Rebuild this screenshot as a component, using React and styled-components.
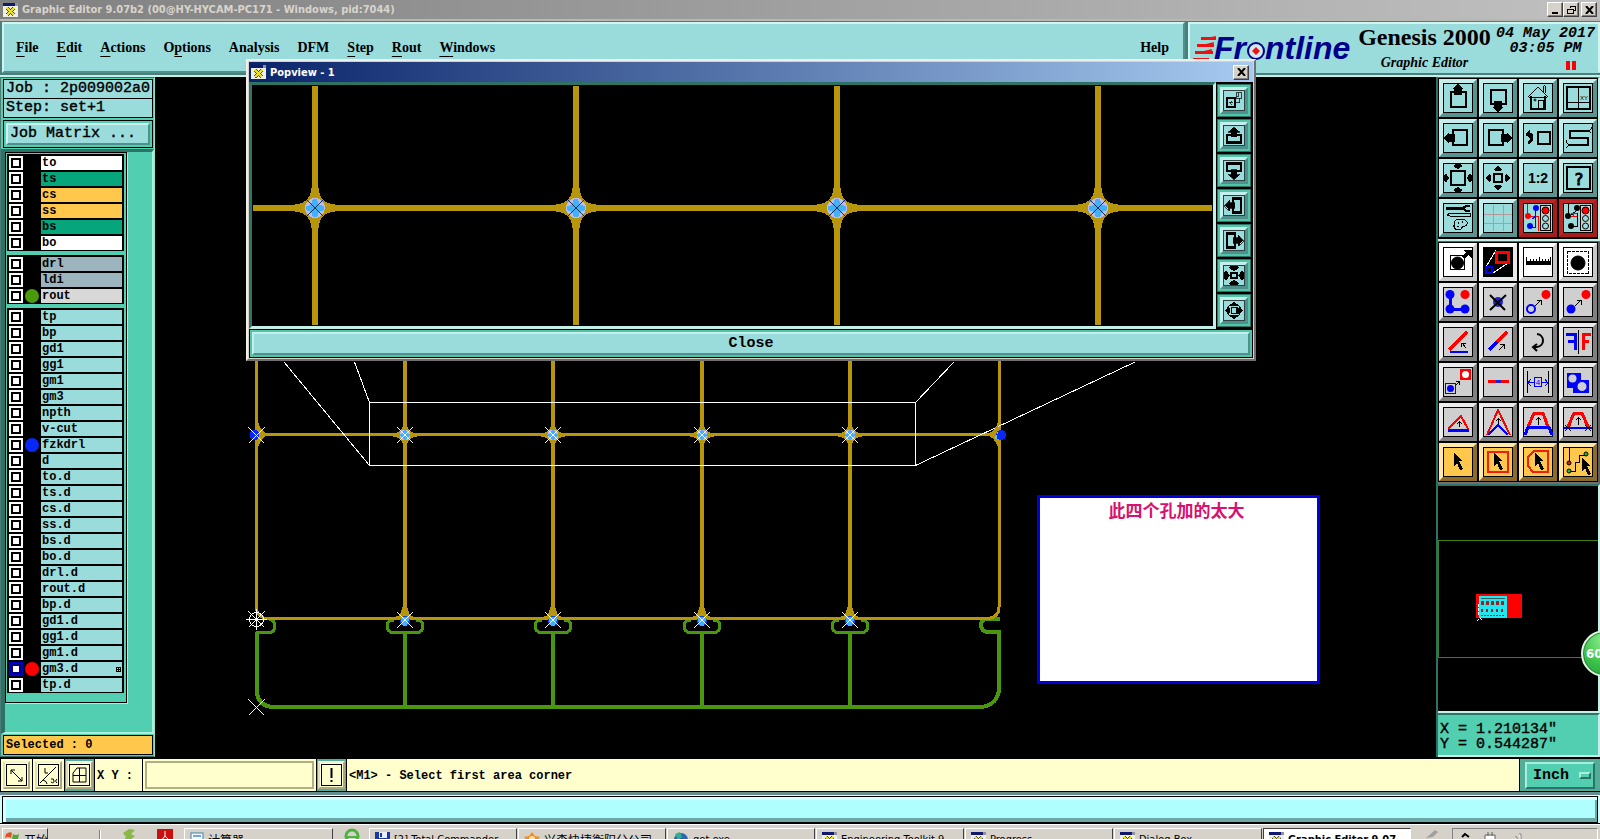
import React, { useState } from 'react';
import styled, { createGlobalStyle } from 'styled-components';

const serif = '"Liberation Serif", serif';
const mono = '"Liberation Mono", monospace';
const tahoma = '"DejaVu Sans Condensed", "DejaVu Sans", "Noto Sans CJK SC", sans-serif';

const GlobalStyle = createGlobalStyle`
* { box-sizing: border-box; }
body { margin: 0; background: #000; overflow: hidden; }
button, input, select { font: inherit; color: inherit; padding: 0; margin: 0; border-radius: 0; }
`;

const Screen = styled.div`
display: flex;
flex-direction: column;
height: 100vh;
background: #000;
color: #000;
position: relative;
overflow: hidden;
`;

/* ---------- window title ---------- */

const TitleBar = styled.div`
display: flex;
align-items: center;
flex: none;
gap: 4px;
height: ${props => props.$active ? '20px' : '21px'};
padding: 0 ${props => props.$active ? '4px 0 2px' : '3px'};
background: linear-gradient(90deg, ${props => props.$active ? '#0a246a, #a6caf0' : '#808080, #c0c0c0'});
color: ${props => props.$active ? '#fff' : '#d8d4cc'};
border-bottom: ${props => props.$active ? '0' : '2px solid #b8b8b0'};
font: bold 11px ${tahoma};
`;

const TitleText = styled.span`
flex: 1;
white-space: nowrap;
`;

const WinButtons = styled.div`
display: flex;
`;

const WinButton = styled.button`
width: 16px;
height: 15px;
display: flex;
align-items: center;
justify-content: center;
background: #d6d2ca;
border: 1px solid;
border-color: #fff #404040 #404040 #fff;
box-shadow: inset -1px -1px #808080;
margin-left: ${props => props.$gap ? '2px' : '0'};
`;

/* ---------- header ---------- */

const Header = styled.header`
display: flex;
flex: none;
height: 56px;
padding: 1px 0 2px 2px;
gap: 3px;
background: #4a7f7a;
border-bottom: 2px solid #c4f0ea;
`;

const MenuBar = styled.nav`
flex: 1;
display: flex;
align-items: center;
gap: 18px;
padding: 0 14px 0 12px;
background: #9adbdb;
border: 2px solid;
border-color: #d0f6f2 #4f8f8c #4f8f8c #d0f6f2;
font: bold 14px ${serif};
`;

const MenuItem = styled.button`
background: none;
border: 0;
margin-left: ${props => props.$last ? 'auto' : '0'};
`;

const Key = styled.span`
text-decoration: underline;
text-underline-offset: 4px;
`;

const Brand = styled.div`
width: 412px;
display: flex;
background: #9adbdb;
border: 2px solid;
border-color: #d0f6f2 #d0f6f2 #9adbdb #d0f6f2;
`;

const BrandLogo = styled.svg`
width: 166px;
height: 50px;
flex: none;
`;

const Product = styled.div`
flex: 1;
text-align: center;
white-space: nowrap;
font: bold 24px/27px ${serif};
`;

const Subtitle = styled.div`
font: italic bold 14px/24px ${serif};
`;

const Clock = styled.div`
width: 105px;
display: flex;
flex-direction: column;
align-items: center;
white-space: nowrap;
font: italic bold 15px/15px ${mono};
padding-top: 2px;
`;

const Pause = styled.div`
width: 10px;
height: 9px;
margin: 5px 0 0 50px;
border: solid #f00;
border-width: 0 4px;
`;

/* ---------- middle ---------- */

const Main = styled.main`
flex: 1;
min-height: 0;
display: flex;
padding-bottom: 2px;
`;

const Sidebar = styled.aside`
width: 155px;
flex: none;
display: flex;
flex-direction: column;
background: #52ceb0;
border: 1px solid;
border-color: #2e7265 #8ce4cc #2e7265 #4a7f7a;
`;

const JobInfo = styled.div`
padding: 1px 1px 0 2px;
font: 15px/18px ${mono};
-webkit-text-stroke: 0.4px #000;
`;

const InfoLine = styled.div`
height: 20px;
margin-bottom: -1px;
padding-left: 2px;
border: 1px solid #000;
background: #9adbdb;
white-space: nowrap;
`;

const MatrixFrame = styled.div`
margin-top: 3px;
padding: 2px;
border: 1px solid #000;
`;

const MatrixButton = styled.button`
width: 100%;
height: 22px;
text-align: left;
padding-left: 2px;
background: #9adbdb;
border: 2px solid;
border-color: #cdf3f0 #4f8f8c #4f8f8c #cdf3f0;
`;

const LayerArea = styled.div`
flex: 1;
margin-top: 1px;
padding: 0 25px 0 0;
border: solid;
border-width: 3px 2px 2px 4px;
border-color: #2e7265 #a8f0dc #a8f0dc #2e7265;
`;

const LayerList = styled.div`
padding: 1px 2px 9px 1px;
border: 1px solid #000;
box-shadow: 1px 1px #a8f0dc;
display: flex;
flex-direction: column;
gap: 4px;
`;

const LayerGroup = styled.ul`
list-style: none;
margin: 0;
padding: 1px 2px 0 2px;
background: #000;
`;

const Layer = styled.li`
display: flex;
align-items: center;
height: 16px;
font: bold 12px/14px ${mono};
`;

const LayerCheck = styled.input`
appearance: none;
flex: none;
width: 14px;
height: 14px;
background: #fff;
border: 2px solid ${props => props.$work ? '#0000c8' : '#fff'};
box-shadow: inset 0 0 0 2px ${props => props.$work ? '#000080' : '#000'};
`;

const LayerDot = styled.span`
flex: none;
width: 14px;
height: 14px;
margin: 0 2px;
border-radius: 50%;
background: ${props => props.$color || '#000'};
`;

const LayerName = styled.label`
flex: 1;
display: flex;
justify-content: space-between;
height: 14px;
padding: 0 1px;
background: ${props => props.$color};
`;

const Affected = styled.svg`
width: 5px;
height: 5px;
margin-top: 5px;
`;

const Selected = styled.div`
height: 20px;
margin: 1px 1px 1px 2px;
padding-left: 2px;
border: 1px solid #000;
background: #ffc84c;
font: bold 12px/18px ${mono};
`;

const Canvas = styled.section`
flex: 1;
min-width: 0;
position: relative;
overflow: hidden;
`;

const Drawing = styled.svg`
display: block;
width: 100%;
height: 100%;
`;

const Note = styled.div`
position: absolute;
left: 882px;
top: 418px;
width: 283px;
height: 189px;
border: 3px solid #0000d8;
background: #fff;
color: #d8106e;
text-align: center;
padding-right: 4px;
font: bold 17px/24px "Noto Sans CJK SC", sans-serif;
`;

/* ---------- right tools ---------- */

const ToolPanel = styled.aside`
width: 164px;
flex: none;
display: flex;
flex-direction: column;
border-left: 2px solid #2e7265;
`;

const ToolGrid = styled.div`
display: grid;
grid-template-columns: repeat(4, 38px);
gap: 2px;
padding: 1px 1px ${props => props.$gray ? '1px' : '2px'};
border: solid;
border-width: 1px 2px 2px 0;
border-color: ${props => props.$gray ? '#606060 #606060 #707070' : '#2e7265 #c4f0ea #c4f0ea'};
`;

const tones = {
  teal: ['#9adbdb', '#c4efec', '#5a9490'],
  alert: ['#9adbdb', '#c02424', '#a81c1c'],
  gray: ['#cfcfcf', '#ececec', '#808080'],
  white: ['#fff', '#fff', '#c8c8c8'],
  inverse: ['#fff', '#fff', '#e8e8e8'],
  orange: ['#ffc84c', '#ffe9a8', '#8c6c28'],
};

const Tool = styled.button`
display: block;
width: 38px;
height: 38px;
background: ${props => tones[props.$tone][0]};
border: 4px solid;
border-color: ${props => tones[props.$tone][1]} ${props => tones[props.$tone][2]} ${props => tones[props.$tone][2]} ${props => tones[props.$tone][1]};

svg {
  display: block;
  width: 30px;
  height: 30px;
}

circle {
  shape-rendering: geometricPrecision;
}
`;

const Overview = styled.div`
flex: 1;
min-height: 0;
border: solid;
border-width: 2px 2px 2px 0;
border-color: #2e7265 #c4f0ea #c4f0ea;
`;

const Coords = styled.div`
height: 44px;
padding: 7px 2px 5px;
background: #52ceb0;
border: solid;
border-width: 2px 2px 2px 0;
border-color: #2e7265 #c4f0ea #c4f0ea;
font: 15px/15px ${mono};
-webkit-text-stroke: 0.4px #000;
`;

const Speed = styled.div`
position: absolute;
right: -28px;
top: 630px;
width: 47px;
height: 47px;
border: 2px solid #dff5df;
border-radius: 50%;
background: radial-gradient(circle at 50% 20%, #90f090, #38c048 60%, #2ca040);
box-shadow: inset 0 0 0 1px #30803c;
color: #fff;
padding-left: 3px;
font: bold 13px/43px ${tahoma};
`;

/* ---------- popview ---------- */

const Popup = styled.section`
position: absolute;
left: 246px;
right: 344px;
top: 59px;
height: 302px;
display: flex;
flex-direction: column;
padding: 1px;
background: #d6d2ca;
border: 2px solid;
border-color: #f0eee8 #707070 #707070 #f0eee8;
`;

const PopupBody = styled.div`
flex: 1;
min-height: 0;
display: flex;
background: #000;
`;

const PopupCanvas = styled.div`
flex: 1;
min-width: 0;
border: 3px solid;
border-color: #2e7265 #c4f0ea #c4f0ea #2e7265;
`;

const PopupTools = styled.div`
display: flex;
flex-direction: column;
gap: 2px;
padding: 2px 2px 1px 1px;
`;

const PopupTool = styled.button`
display: block;
width: 34px;
height: 33px;
background: #9adbdb;
border: 3px solid #52c4a8;
outline: 1px solid #2e7265;
outline-offset: -1px;

svg {
  display: block;
  width: 28px;
  height: 27px;
  border: 3px solid;
  border-color: #c4efec #4f8f8c #4f8f8c #c4efec;
}
`;

const CloseFrame = styled.div`
flex: none;
padding: 1px;
background: #000;
`;

const CloseButton = styled.button`
display: block;
width: 100%;
height: 27px;
background: #9adbdb;
outline: 2px solid #52c4a8;
outline-offset: -2px;
border: 4px solid;
border-color: #c4efec #4f8f8c #4f8f8c #c4efec;
font: bold 15px/15px ${mono};
`;

/* ---------- bottom ---------- */

const InputBar = styled.div`
flex: none;
height: 33px;
display: flex;
gap: 1px;
padding-left: 1px;
background: #000;
font: bold 12px ${mono};
border-bottom: 1px solid #000;
`;

const BarCell = styled.div`
display: flex;
align-items: center;
justify-content: center;
flex: none;
width: ${props => props.$width};
background: ${props => props.$teal ? '#52ae98' : '#ffffce'};
`;

const BarButton = styled.button`
width: 27px;
height: 28px;
background: #ffffce;
border: 2px solid;
border-color: #f4f4d0 #a8a888 #a8a888 #e0e0b8;

svg {
  display: block;
  margin: 1px;
  width: 21px;
  height: 22px;
}
`;

const CoordLabel = styled.label`
display: flex;
align-items: center;
width: 47px;
padding: 2px 0 0 2px;
background: #ffffce;
white-space: pre;
`;

const CoordInput = styled.input`
width: 173px;
height: 32px;
padding-left: 5px;
background: #ffffce;
border: 2px solid #ffffce;
box-shadow: inset 0 0 0 2px #b0b088;
`;

const Message = styled.div`
flex: 1;
padding: 1px 0 0 2px;
line-height: 32px;
background: #ffffce;
`;

const Unit = styled.label`
display: flex;
align-items: center;
width: 70px;
height: 27px;
padding: 0 2px 0 6px;
background: #52ceb0;
border: 2px solid;
border-color: #a8f0dc #2e7265 #2e7265 #a8f0dc;
`;

const UnitSelect = styled.select`
appearance: none;
width: 46px;
background: none;
border: 0;
font: bold 15px ${mono};
`;

const Nub = styled.span`
width: 12px;
height: 7px;
background: #52ceb0;
border: 2px solid;
border-color: #a8f0dc #2e7265 #2e7265 #a8f0dc;
`;

const CommandLine = styled.div`
flex: none;
height: 31px;
margin-bottom: 1px;
padding: 1px 2px 2px;
background: #d0ffff;
border-top: 3px solid #688c90;
`;

const CommandField = styled.div`
height: 27px;
background: #b0ffff;
border: 1px solid #000;
box-shadow: inset 3px 3px #d8ffff, inset -2px -4px #6ca8a8;
`;

const Taskbar = styled.footer`
flex: none;
height: 15px;
overflow: hidden;
display: flex;
padding: 3px 2px 0;
background: #d6d2ca;
border-top: 1px solid #fff;
font: 11px ${tahoma};
`;

const Task = styled.button`
display: flex;
align-items: center;
gap: 4px;
flex: ${props => props.$fixed ? 'none' : '1 1 0'};
width: ${props => props.$fixed || 'auto'};
min-width: 0;
height: 22px;
padding-left: ${props => props.$start ? '2px' : '5px'};
margin-right: 1px;
overflow: hidden;
white-space: nowrap;
background: ${props => props.$active ? '#fff' : '#d6d2ca'};
border: 1px solid;
border-color: ${props => props.$active ? '#404040 #fff #fff #404040' : '#fff #404040 #404040 #fff'};
font-weight: ${props => props.$active ? 'bold' : 'normal'};
font-size: ${props => props.$large ? '12px' : '11px'};

svg {
  flex: none;
}
`;

const Quick = styled.div`
flex: none;
width: ${props => props.$width};
display: flex;
justify-content: center;
height: 22px;
`;

const Divider = styled.span`
flex: none;
width: 2px;
height: 16px;
margin: 2px 20px 0 58px;
border-left: 1px solid #808080;
border-right: 1px solid #fff;
`;

const QuickIcon = styled.svg`
flex: none;
width: 16px;
height: 16px;
margin-right: 20px;
`;

const Tray = styled.div`
flex: none;
width: 146px;
height: 22px;
padding: 2px 8px;
display: flex;
gap: 12px;
border: 1px solid;
border-color: #808080 #fff #fff #808080;
`;

/* ---------- small glyphs ---------- */

const AppIcon = () => (
  <svg width="15" height="14" viewBox="0 0 15 14" shapeRendering="crispEdges">
    <rect width="15" height="14" fill="#eeeee8" />
    <rect width="12" height="3" fill="#101870" />
    <rect x="12" width="3" height="3" fill="#9090a0" />
    <path d="M4 5l7 7M11 5l-7 7" stroke="#505040" strokeWidth="3" />
    <path d="M4 5l7 7M11 5l-7 7" stroke="#e8e020" strokeWidth="2" />
  </svg>
);

const Cross = () => (
  <svg width="9" height="8" viewBox="0 0 9 8"><path d="M1 0l7 8M8 0l-7 8" stroke="#000" strokeWidth="2" /></svg>
);

const Frame = ({ children }) => (
  <svg viewBox="0 0 30 30" fill="none" stroke="#000" strokeWidth="1" shapeRendering="crispEdges">
    <rect x="0.5" y="0.5" width="29" height="29" />
    {children}
  </svg>
);

const upArrow = 'M15 1l6 5h-2v6h-8v-6h-2z';

const Arrow = ({ turn = 0 }) => <path d={upArrow} fill="#000" stroke="none" transform={`rotate(${turn} 15 15)`} />;

const Heads = ({ d }) => [0, 90, 180, 270].map(a => (
  <path key={a} d={d} fill="#000" stroke="none" transform={`rotate(${a} 15 15)`} />
));

const Pads = ({ children }) => (
  <>
    {children}
    <rect x="17.500" y="2.500" width="10" height="25" fill="#cfcfcf" />
    <circle cx="22.5" cy="7.5" r="3.5" fill="#f00" />
    <circle cx="22.5" cy="15.5" r="3" fill="#9adbdb" />
    <circle cx="22.5" cy="23" r="3" fill="#9adbdb" />
  </>
);

const Pointer = ({ x = 0, y = 0 }) => (
  <path d="M11 6l8 8-3 0 4 8-3 1-3-7-3 3z" fill="#000" stroke="none" transform={`translate(${x} ${y})`} />
);

const viewTools = [
  ['Pan up', <><rect x="8" y="9" width="15" height="15" strokeWidth="2" /><Arrow /></>],
  ['Pan down', <><rect x="8" y="7" width="15" height="14" strokeWidth="2" /><Arrow turn={180} /></>],
  ['Home', <>
    <path d="M5 14L15 4l10 10M20 9V4l2-2M22 10V3" strokeWidth="1" />
    <path d="M8 13v13h14V13" strokeWidth="2" />
    <path d="M6 14h18M15 25v-8h5v8" /><circle cx="12" cy="17" r="1" />
  </>],
  ['Coordinates', <>
    <rect x="4" y="4" width="23" height="22" strokeWidth="2" /><path d="M15.500 4v22M4 19.500h23" />
    <text x="17" y="17" fontSize="6" fontFamily="Liberation Sans" fill="#000" stroke="none">XY</text>
  </>],
  ['Pan left', <><rect x="10" y="7" width="14" height="15" strokeWidth="2" /><Arrow turn={270} /></>],
  ['Pan right', <><rect x="6" y="7" width="14" height="15" strokeWidth="2" /><Arrow turn={90} /></>],
  ['Previous view', <>
    <rect x="15" y="9" width="12" height="12" strokeWidth="2" />
    <path d="M3 11h5q2 4 0 7l-3 2" strokeWidth="3" /><path d="M7 6v10l-5-5z" fill="#000" stroke="none" />
  </>],
  ['Serpentine', <><path d="M26 8H7v7h18v7H6" strokeWidth="2" /><path d="M26 8l2-2v-2M26 8l2 2M6 22l-3-3v-2M6 22l-3 3" /></>],
  ['Zoom out', <><rect x="8" y="8" width="14" height="14" strokeWidth="2" /><Heads d="M15 6l5-3-3-2h-4l-3 2z" /></>],
  ['Zoom in', <><rect x="11" y="11" width="8" height="8" strokeWidth="2" /><Heads d="M15 3l5 4-4 1h-2l-4-1z" /></>],
  ['Scale one to two', <text x="15" y="20" textAnchor="middle" fontSize="14" fontWeight="bold" fontFamily="Liberation Sans" fill="#000" stroke="none">1:2</text>],
  ['Query', <>
    <rect x="4" y="4" width="23" height="22" strokeWidth="2" />
    <text x="16" y="22" textAnchor="middle" fontSize="16" fontFamily="DejaVu Sans" fill="#000" stroke="#000">?</text>
  </>],
  ['Setup', <>
    <path d="M3 5h17" strokeWidth="3" /><path d="M27 3h-4l-3 2 3 3h4" strokeWidth="2" />
    <path d="M4 12l3-2h20v3H7z" />
    <path d="M13 17c6-2 12 0 11 4c-1 4-6 1-6 5c-3 2-8 0-7-4c0-2 0-4 2-5zM15 19v2M19 18v2M14 23h2" />
  </>],
  ['Grid', <path d="M10.500 2v26M20.500 2v26M1 11.500h28M1 20.500h28" stroke="#b49a9c" />],
  ['Net select', <Pads>
    <path d="M4.500 1v12M4 13.500h11v14" stroke="#f00" />
    <path d="M12.500 5v8l-3 3M7 24h5V14" stroke="#00f" />
    <circle cx="13" cy="5" r="3" fill="#00f" stroke="none" /><circle cx="5" cy="13" r="3" fill="#f00" stroke="none" />
    <circle cx="7" cy="23" r="3" fill="#00f" stroke="none" />
  </Pads>, 'alert'],
  ['Net compare', <Pads>
    <path d="M5.500 1v12M13 5v3l-6 5M8 23h6V10" />
    <path d="M8 10.500h6M8 13.500h6M10.500 10v4" stroke="#f00" />
    <circle cx="14" cy="5" r="3" fill="#000" stroke="none" /><circle cx="5" cy="13" r="3" fill="#000" stroke="none" />
    <circle cx="8" cy="23" r="3" fill="#000" stroke="none" />
  </Pads>, 'alert'],
];

const editTools = [
  ['Move feature', <>
    <rect x="7.500" y="8.500" width="14" height="14" /><circle cx="14.500" cy="16" r="6" fill="#000" />
    <path d="M20 11l6-6" strokeWidth="3" /><path d="M20 3h9v8z" fill="#000" stroke="none" />
  </>, 'white'],
  ['Area zoom', <>
    <rect x="1" y="1" width="28" height="28" fill="#000" stroke="none" />
    <path d="M3 20L13 3M10 26l15-10" stroke="#fff" />
    <rect x="13" y="5" width="12" height="10" stroke="#f00" strokeWidth="3" />
    <rect x="3" y="20" width="6" height="6" stroke="#0000f8" strokeWidth="2" />
  </>, 'inverse'],
  ['Measure', <><path d="M3 16h25" strokeWidth="4" /><path d="M3.500 10v8M7.500 12v6M10.500 12v6M13.500 12v6M16.500 10v8M19.500 12v6M22.500 12v6M25.500 12v6M27.500 10v8" /></>, 'white'],
  ['Select', <><rect x="4.500" y="4.500" width="21" height="22" strokeDasharray="3 1" /><circle cx="15" cy="16" r="7" fill="#000" /></>, 'white'],
  ['Chain', <>
    <path d="M7 8v14h15" stroke="#00f" strokeWidth="3" />
    <circle cx="7" cy="7.500" r="4.500" fill="#00f" stroke="none" /><circle cx="7" cy="22" r="4.500" fill="#00f" stroke="none" />
    <circle cx="22" cy="22" r="4.500" fill="#00f" stroke="none" /><circle cx="22" cy="7.500" r="4.500" fill="#f00" stroke="none" />
  </>],
  ['Delete', <><circle cx="15" cy="15" r="5" fill="#2020d0" stroke="none" /><path d="M7 8l15 15M23 8L7 23" strokeWidth="2" shapeRendering="auto" /></>],
  ['Copy', <><circle cx="8" cy="22" r="4" stroke="#00f" strokeWidth="2" /><circle cx="23" cy="7.500" r="4.500" fill="#f00" stroke="none" /><path d="M12 19l5-5M14 13.500h4v4" /></>],
  ['Move', <><circle cx="8" cy="22" r="4.500" fill="#00f" stroke="none" /><circle cx="23" cy="7.500" r="4.500" fill="#f00" stroke="none" /><path d="M12 19l5-5M14 13.500h4v4" /></>],
  ['Rotate', <><path d="M7 25h18" stroke="#00f" strokeWidth="2" /><path d="M6 23L24 5" stroke="#f00" strokeWidth="3" /><path d="M23 21l-4-5M18.500 20v-4h4" /></>],
  ['Extend', <><path d="M6 23l9-9" stroke="#00f" strokeWidth="3" /><path d="M14 15l10-10" stroke="#f00" strokeWidth="3" /><path d="M16 23l5-5M17 17.500h4v4" /></>],
  ['Turn back', <path d="M14 7c8 1 8 12 0 13h-3M14 17l-4 3 4 4" strokeWidth="2" shapeRendering="auto" />],
  ['Mirror', <><path d="M3 7h9v16M5 14h7" stroke="#00f" strokeWidth="3" /><path d="M28 7h-8v16M19 14h7" stroke="#f00" strokeWidth="3" /><path d="M15.500 3v24" /></>],
  ['Swap', <>
    <rect x="2.500" y="16.500" width="10" height="10" stroke="#00f" /><circle cx="7.500" cy="21.500" r="3.500" fill="#00f" stroke="none" />
    <rect x="17" y="2" width="11" height="11" fill="#f00" stroke="none" /><circle cx="22.500" cy="7.500" r="3.500" fill="#fff" stroke="none" />
    <path d="M13 18l3-3M13 14.500h3v3" />
  </>],
  ['Break', <><path d="M5 14.500h21" stroke="#f00" strokeWidth="3" /><path d="M13 14.500h5" stroke="#2020d0" strokeWidth="3" /></>],
  ['Distance', <>
    <path d="M4.500 4v22M25.500 4v22" /><path d="M5 15.500h6M19 15.500h6M8 12l-3 4 3 3M22 12l3 4-3 3" stroke="#00f" />
    <rect x="11.500" y="10.500" width="7" height="9" stroke="#00f" />
    <text x="15" y="18" textAnchor="middle" fontSize="8" fontFamily="Liberation Sans" fill="#00f" stroke="none">4</text>
  </>],
  ['Merge', <>
    <rect x="4" y="6" width="14" height="15" fill="#00f" stroke="none" /><rect x="10" y="13" width="16" height="13" fill="#00f" stroke="none" />
    <circle cx="9.500" cy="11.500" r="4" fill="#cfcfcf" stroke="none" /><circle cx="19" cy="19.500" r="5" fill="#cfcfcf" stroke="#00f" />
  </>],
  ['Triangle', <><path d="M5 22L18 9l7 13" stroke="#f00" strokeWidth="2" /><path d="M5 23h21" stroke="#00f" strokeWidth="3" /><path d="M16.500 20v-5M14 17l2.500-2 2.500 2" /></>],
  ['Spike', <><path d="M4 28L15 3l12 25" stroke="#f00" strokeWidth="2" /><path d="M5 28l10-10 10 10" stroke="#00f" strokeWidth="2" /><path d="M15.500 17v-5M13 14l2.500-2 2.500 2" /></>],
  ['Bridge', <><path d="M5 20L11 6h9l5 14" stroke="#f00" strokeWidth="3" /><path d="M2 28l3-8h21l3 8" stroke="#00f" strokeWidth="3" /><path d="M15.500 18v-7M13 13l2.500-2 2.500 2" /></>],
  ['Bridge cut', <><path d="M5 20L11 6h8l6 14" stroke="#f00" strokeWidth="3" /><path d="M1 21h28" stroke="#00f" strokeWidth="2" /><path d="M15.500 18v-7M13 13l2.500-2 2.500 2M2 18l6 6M8 18l-6 6M22 18l6 6M28 18l-6 6" /></>],
  ['Pick', <Pointer />, 'orange'],
  ['Pick in rectangle', <><rect x="5" y="5" width="20" height="20" stroke="#f02010" strokeWidth="2" /><Pointer /></>, 'orange'],
  ['Pick in polygon', <><path d="M11 4h14v21H10l-5-6v-9z" stroke="#f02010" strokeWidth="2" /><Pointer x={1} /></>, 'orange'],
  ['Pick net', <>
    <path d="M6.500 1v15M6 24h6V15h4V8h7" /><circle cx="6" cy="16" r="2" fill="#d02010" /><circle cx="6" cy="24" r="2" fill="#20c020" />
    <circle cx="23" cy="7" r="2" fill="#20c020" /><Pointer x={8} y={5} />
  </>, 'orange'],
];

const popTools = [
  ['Linked view', <><rect x="5" y="12" width="12" height="12" strokeWidth="3" /><path d="M17 18h6v-6M18 4h8v8h-8zM22 4v5h-3M14 18H8M11 15l-3 3 3 3" /></>],
  ['Popview up', <><rect x="5" y="14" width="20" height="11" strokeWidth="3" /><path d="M15 3l8 7h-4v7h-8v-7h-4z" fill="#000" /></>],
  ['Popview down', <><rect x="5" y="5" width="20" height="11" strokeWidth="3" /><path d="M15 28l8-7h-4v-7h-8v7h-4z" fill="#000" /></>],
  ['Popview left', <><rect x="14" y="5" width="11" height="20" strokeWidth="3" /><path d="M2 15l7-8v4h7v8h-7v4z" fill="#000" /></>],
  ['Popview right', <><rect x="5" y="5" width="11" height="20" strokeWidth="3" /><path d="M28 15l-7-8v4h-7v8h7v4z" fill="#000" /></>],
  ['Popview zoom out', <><rect x="11" y="11" width="8" height="8" strokeWidth="3" /><Heads d="M15 9l7-5-3-3h-8l-3 3z" /></>],
  ['Popview zoom in', <><rect x="11" y="11" width="8" height="8" strokeWidth="2" /><Heads d="M15 2l7 6-5 1h-4l-5-1z" /></>],
];

const star = 'M-22-3L-13-5L-8-8L-5-13L-3-22H3L5-13L8-8L13-5L22-3V3L13 5L8 8L5 13L3 22H-3L-5 13L-8 8L-13 5L-22 3Z';

const Hole = ({ x, y, k = 1 }) => (
  <g transform={`translate(${x} ${y}) scale(${k})`}>
    <path d={star} fill="#b8960c" />
    <circle r="10" fill="#bcbcf0" />
    <path d="M-9-2L-4-3-2-9H2L4-3 9-2V2L4 4 2 9H-2L-4 4-9 2Z" fill="#44b0f8" />
    <path d="M-8-8L8 8M8-8L-8 8" stroke="#103050" strokeWidth="1" />
  </g>
);

const Ex = ({ x, y }) => <path d={`M${x - 8} ${y - 8}l16 16M${x + 8} ${y - 8}l-16 16`} stroke="#fff" />;

const columns = [405, 553, 702, 850];

const Board = () => (
  <Drawing shapeRendering="crispEdges" fill="none">
    <g transform="translate(-155 -77)">
      <g stroke="#4a960e" strokeWidth="3">
        <path d="M256.500 632V690Q258 707 274 707H982Q998 704 999 689V632H989Q981 632 981 625Q981 619 988 619H1000" strokeWidth="4" />
        <path d="M256 632.500h13q6 0 6-7q0-5-6-6" />
        {columns.map(x => (
          <g key={x}>
            <path d={`M${x} 632V707`} strokeWidth="4" />
            <path d={`M${x - 11} 620q-7 0-7 6q0 6.500 7 6.500h22q7 0 7-6.500q0-6-7-6`} />
          </g>
        ))}
      </g>
      <g stroke="#b8960c" strokeWidth="3">
        <path d="M256.500 340V610Q259 618.500 268 618.500H988Q999 617 999 607V340" />
        <path d="M256 434.500H998" />
        {columns.map(x => <path key={x} d={`M${x} 340V618`} strokeWidth="4" />)}
      </g>
      <path d="M369.500 402.500H915.500V465.500H369.500ZM284 362L369.500 465.500M354.500 362L369.500 402.500M954 362L915.500 402.500M1135 362L915.500 465.500" stroke="#fff" />
      <path d="M258 422q3 10 11 12.500q-8 3-11 13zM998 422q-3 10-12 12.500q9 3 12 13z" fill="#b8960c" />
      <circle cx="254.500" cy="435" r="5" fill="#0828f8" />
      <circle cx="1001" cy="435" r="5" fill="#0828f8" />
      <path d="M997 430v9h-2v-3l3-3z" fill="#60c0f0" />
      <Ex x={256.5} y={435.5} />
      {columns.map(x => (
        <g key={x}>
          <Hole x={x} y={435} k={0.55} />
          <Ex x={x} y={435} />
          <path d={`M${x - 12} 618l7-3 3-9h4l3 9 7 3z`} fill="#b8960c" />
          <circle cx={x} cy="621" r="5" fill="#0848e8" />
          <path d={`M${x - 4} 617h8v3l-2 6h-4l-2-6z`} fill="#44b0f8" />
          <Ex x={x} y={620} />
        </g>
      ))}
      <circle cx="256.500" cy="619.500" r="7" stroke="#fff" />
      <path d="M246 619.500h21M256.500 609v21" stroke="#fff" />
      <Ex x={256.5} y={619.5} />
      <Ex x={256.5} y={707.5} />
    </g>
  </Drawing>
);

const PopBoard = () => (
  <Drawing shapeRendering="crispEdges" fill="none">
    <g transform="translate(-252 -85)">
      <path d="M253 208H1212M315 86V325M576 86V325M837 86V325M1098 86V325" stroke="#b8960c" strokeWidth="6" />
      {[315, 576, 837, 1098].map(x => <Hole key={x} x={x} y={208} />)}
    </g>
  </Drawing>
);

const Panorama = () => (
  <Drawing shapeRendering="crispEdges" fill="none">
    <path d="M170 54.500H.5V171.500H170" stroke="#3c8014" />
    <rect x="38" y="108" width="46" height="24" fill="#f00" />
    <rect x="41" y="110" width="28" height="22" fill="#20e8f0" />
    <path d="M43 112.500h24" stroke="#306060" />
    <path d="M43 117h24" stroke="#a02020" strokeWidth="4" strokeDasharray="3 2" />
    <path d="M43 124h24" stroke="#a02020" strokeWidth="3" strokeDasharray="2 3" />
    <path d="M43 129.500h24" stroke="#a02020" strokeDasharray="2 1" />
    <path d="M39 135l3-3 3 3M40 118v12" stroke="#fff" strokeDasharray="3 1" />
  </Drawing>
);

const Logo = () => (
  <BrandLogo viewBox="0 0 166 50">
    <path d="M11 13h15v3h-15zM7 20h17v3h-17zM5 27h18v3h-18zM3 34h16v2h-16z" fill="#f01010" />
    <path d="M16 14l10-2-1 4zM12 21l12-3-1 5zM10 28l12-3-1 5z" fill="#f01010" />
    <g fill="#00008c" fontFamily="Liberation Sans" fontWeight="bold" fontStyle="italic" fontSize="32">
      <text x="24" y="35">Fr</text>
      <text x="75" y="35">ntline</text>
    </g>
    <circle cx="66" cy="27" r="8" fill="#d0e8f0" stroke="#00008c" strokeWidth="2" />
    <path d="M66 23l4 4-4 4-4-4z" fill="#f01010" />
  </BrandLogo>
);

const menus = [['', 'F', 'ile'], ['', 'E', 'dit'], ['', 'A', 'ctions'], ['O', 'p', 'tions'], ['Analysis', '', ''],
  ['DFM', '', ''], ['', 'S', 'tep'], ['', 'R', 'out'], ['', 'W', 'indows']];

const cyan = '#9adbdb';
const layerGroups = [
  [['to', '#fff'], ['ts', '#06a57c'], ['cs', '#ffc84c'], ['ss', '#ffc84c'], ['bs', '#06a57c'], ['bo', '#fff']],
  [['drl', '#9cb4be'], ['ldi', '#9cb4be'], ['rout', '#d8d8d8', '#4a9a0c']],
  ['tp', 'bp', 'gd1', 'gg1', 'gm1', 'gm3', 'npth', 'v-cut', 'fzkdrl', 'd', 'to.d', 'ts.d', 'cs.d', 'ss.d', 'bs.d', 'bo.d',
    'drl.d', 'rout.d', 'bp.d', 'gd1.d', 'gg1.d', 'gm1.d', 'gm3.d', 'tp.d']
    .map(name => [name, cyan, { fzkdrl: '#0828f8', 'gm3.d': '#f00' }[name]]),
];

const Flag = () => (
  <svg width="15" height="16" viewBox="0 0 15 16">
    <path d="M1 3q4-3 6-1l-1 5q-3-2-6 0z" fill="#e05020" /><path d="M8 3q3 2 6 0l-1 5q-3 2-6 0z" fill="#50a830" />
    <path d="M0 9q3-2 6 0l-1 5q-3-2-5 0z" fill="#3878d8" /><path d="M7 9q3 2 6 0l-1 5q-3 2-6 0z" fill="#f0c020" />
  </svg>
);
const Calc = () => <svg width="14" height="14"><rect x="1" y="1" width="12" height="13" fill="#f4f8ff" stroke="#4080b0" /><path d="M3 4h8" stroke="#70a8d8" strokeWidth="2" /></svg>;
const Disk = () => <svg width="15" height="15"><path d="M0 0h15v15H0z" fill="#1838a8" /><path d="M4 0h8v6H4z" fill="#e8f0ff" /><path d="M5 1h2v4H5z" fill="#1838a8" /></svg>;
const Star = () => <svg width="16" height="15"><path d="M8 0l3 4 5 1-3 4 0 6-5-2-5 2 0-6-3-4 5-1z" fill="#f09020" /><circle cx="8" cy="7" r="3" fill="#ffe0a0" /></svg>;
const Globe = () => <svg width="16" height="15"><circle cx="8" cy="8" r="7" fill="#2868b0" /><path d="M2 2l5-2 2 5-4 3zM9 8l5-1-1 5z" fill="#30b090" /></svg>;

const tasks = [
  ['[2] Total Commander ...', <Disk />], ['兴森快捷衡阳分公司 ...', <Star />], ['get.exe', <Globe />],
  ['Engineering Toolkit 9....', <AppIcon />], ['Progress', <AppIcon />], ['Dialog Box', <AppIcon />], ['Graphic Editor 9.07...', <AppIcon />],
];

const Layers = () => (
  <LayerList>
    {layerGroups.map((group, i) => (
      <LayerGroup key={i}>
        {group.map(([name, color, dot]) => (
          <Layer key={name}>
            <LayerCheck type="checkbox" id={`layer-${name}`} $work={name === 'gm3.d'} />
            <LayerDot $color={dot} />
            <LayerName htmlFor={`layer-${name}`} $color={color}>
              {name}
              {name === 'gm3.d' && (
                <Affected viewBox="0 0 5 5" shapeRendering="crispEdges"><path d="M0 .5h5M0 2.500h5M0 4.500h5M.5 0v5M2.500 0v5M4.500 0v5" stroke="#000" /></Affected>
              )}
            </LayerName>
          </Layer>
        ))}
      </LayerGroup>
    ))}
  </LayerList>
);

const App = () => {

  const [popup, setPopup] = useState(true)
  const [xy, setXy] = useState('')

  return <Screen>
    <GlobalStyle />
    <TitleBar>
      <AppIcon />
      <TitleText>Graphic Editor 9.07b2 (00@HY-HYCAM-PC171 - Windows, pid:7044)</TitleText>
      <WinButtons>
        <WinButton aria-label="Minimize"><svg width="9" height="8"><path d="M1 7h6" stroke="#000" strokeWidth="2" /></svg></WinButton>
        <WinButton aria-label="Restore"><svg width="9" height="9" fill="none" stroke="#000" shapeRendering="crispEdges"><path d="M3 3V1h5v4H6M3 1h6M0 4h6v4H.5V4" /></svg></WinButton>
        <WinButton aria-label="Close window" $gap><Cross /></WinButton>
      </WinButtons>
    </TitleBar>
    <Header>
      <MenuBar>
        {menus.map(([before, key, after]) => (
          <MenuItem key={before + key + after}>{before}{key && <Key>{key}</Key>}{after}</MenuItem>
        ))}
        <MenuItem $last>Help</MenuItem>
      </MenuBar>
      <Brand>
        <Logo />
        <Product>Genesis 2000<Subtitle>Graphic Editor</Subtitle></Product>
        <Clock><span>04 May 2017</span><span>03:05 PM</span><Pause /></Clock>
      </Brand>
    </Header>
    <Main>
      <Sidebar>
        <JobInfo>
          <InfoLine>Job : 2p009002a0</InfoLine>
          <InfoLine>Step: set+1</InfoLine>
          <MatrixFrame><MatrixButton>Job Matrix ...</MatrixButton></MatrixFrame>
        </JobInfo>
        <LayerArea><Layers /></LayerArea>
        <Selected>Selected : 0</Selected>
      </Sidebar>
      <Canvas>
        <Board />
        <Note>此四个孔加的太大</Note>
      </Canvas>
      <ToolPanel>
        <ToolGrid>
          {viewTools.map(([name, icon, tone = 'teal']) => <Tool key={name} aria-label={name} $tone={tone}><Frame>{icon}</Frame></Tool>)}
        </ToolGrid>
        <ToolGrid $gray>
          {editTools.map(([name, icon, tone = 'gray']) => <Tool key={name} aria-label={name} $tone={tone}><Frame>{icon}</Frame></Tool>)}
        </ToolGrid>
        <Overview><Panorama /></Overview>
        <Coords>
          <div>X = 1.210134"</div>
          <div>Y = 0.544287"</div>
        </Coords>
      </ToolPanel>
    </Main>
    <InputBar>
      <BarCell $width="31px"><BarButton aria-label="Diagonal"><svg fill="none" stroke="#000"><rect x=".5" y=".5" width="20" height="21" /><path d="M5 6l11 11M5 10V6h4M16 13v4h-4" /></svg></BarButton></BarCell>
      <BarCell $width="31px"><BarButton aria-label="Angle"><svg fill="none" stroke="#000"><rect x=".5" y=".5" width="20" height="21" /><path d="M2 19L18 3M7 4v5h3M5 16q4 1 4 4M13 15q3-1 3 2t-3 1M19 15q-3 2 0 4" /></svg></BarButton></BarCell>
      <BarCell $width="29px" $teal><BarButton aria-label="Snap grid"><svg fill="none" stroke="#000"><rect x=".5" y=".5" width="20" height="21" /><path d="M4 18V9l4-5h9v14zM10.500 4v14M4 11.500h13" /></svg></BarButton></BarCell>
      <CoordLabel htmlFor="xy">X Y :</CoordLabel>
      <CoordInput id="xy" value={xy} onChange={e => setXy(e.target.value)} />
      <BarCell $width="29px" $teal><BarButton aria-label="Notice"><svg fill="none" stroke="#000"><rect x=".5" y=".5" width="20" height="21" /><path d="M10.500 4v10M10.500 16v2" strokeWidth="2" /></svg></BarButton></BarCell>
      <Message>&lt;M1&gt; - Select first area corner</Message>
      <BarCell $width="80px" $teal>
        <Unit>
          <UnitSelect aria-label="Units" defaultValue="Inch"><option>Inch</option></UnitSelect>
          <Nub />
        </Unit>
      </BarCell>
    </InputBar>
    <CommandLine><CommandField /></CommandLine>
    <Taskbar>
      <Task $fixed="46px" $start $large><Flag />开始</Task>
      <Quick $width="135px">
        <Divider />
        <QuickIcon viewBox="0 0 16 16"><path d="M2 5l6-4 6 1-4 4 4 2-6 5H2l3-4z" fill="#88b848" /></QuickIcon>
        <QuickIcon viewBox="0 0 16 16"><rect y="1" width="16" height="15" fill="#c81010" /><path d="M8 3v5l-4 5M8 8l4 4" stroke="#fff" fill="none" /></QuickIcon>
      </Quick>
      <Task $fixed="149px" $large><Calc />计算器</Task>
      <Quick $width="35px"><svg width="16" height="16"><circle cx="8" cy="8" r="6" fill="none" stroke="#50b040" strokeWidth="3" /><path d="M3 9h10" stroke="#50b040" strokeWidth="2" /></svg></Quick>
      {tasks.map(([name, icon]) => <Task key={name} $active={name.startsWith('Graphic')} $large={name.startsWith('兴')}>{icon}{name}</Task>)}
      <Quick $width="40px"><svg width="14" height="14"><path d="M1 10l9-8 3 2-5 5z" fill="#a0a0a0" /></svg></Quick>
      <Tray>
        <svg width="10" height="12"><path d="M1 6l3-3 4 3" stroke="#000" fill="none" strokeWidth="2" /></svg>
        <svg width="14" height="14"><path d="M2 4h10v5H2zM5 1v4M9 1v4M7 9v5" fill="#fff" stroke="#606060" /></svg>
        <svg width="14" height="14"><path d="M2 9h2v5M6 6h2v8M10 3h2v11" fill="#fff" stroke="#808080" /></svg>
      </Tray>
    </Taskbar>
    <Speed>60</Speed>
    {popup && <Popup>
      <TitleBar $active>
        <AppIcon />
        <TitleText>Popview - 1</TitleText>
        <WinButton aria-label="Close Popview" onClick={() => setPopup(false)}><Cross /></WinButton>
      </TitleBar>
      <PopupBody>
        <PopupCanvas><PopBoard /></PopupCanvas>
        <PopupTools>
          {popTools.map(([name, icon]) => <PopupTool key={name} aria-label={name}><Frame>{icon}</Frame></PopupTool>)}
        </PopupTools>
      </PopupBody>
      <CloseFrame><CloseButton onClick={() => setPopup(false)}>Close</CloseButton></CloseFrame>
    </Popup>}
  </Screen>

}

export default App;
